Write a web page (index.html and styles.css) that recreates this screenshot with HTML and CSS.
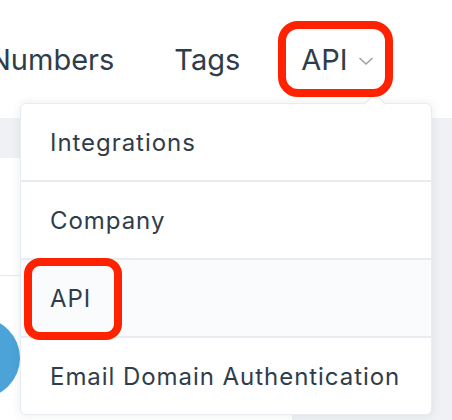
FILE: index.html
```html
<!DOCTYPE html>
<html lang="en">
<head>
    <meta charset="UTF-8">
    <meta name="viewport" content="width=device-width, initial-scale=1.0">
    <title>Settings menu</title>
    <link rel="stylesheet" href="styles.css">
</head>
<body>
    <div class="page">
        <header class="topbar">
            <nav class="nav">
                <a class="nav-item nav-first">Numbers</a>
                <a class="nav-item nav-tags">Tags</a>
                <a class="nav-item nav-active">API
                    <svg class="chevron" width="16" height="10" viewBox="0 0 16 10">
                        <path d="M1.5 2 L8 8 L14.5 2" fill="none" stroke="#9aa2ab" stroke-width="1.6"/>
                    </svg>
                </a>
            </nav>
        </header>

        <div class="content">
            <div class="toolbar"></div>
            <div class="panel">
                <div class="panel-row"></div>
                <div class="avatar"></div>
            </div>
        </div>

        <!-- dropdown under the API tab -->
        <div class="dropdown">
            <div class="dropdown-caret"></div>
            <ul class="menu">
                <li class="menu-item">Integrations</li>
                <li class="menu-item">Company</li>
                <li class="menu-item hovered">API</li>
                <li class="menu-item">Email Domain Authentication</li>
            </ul>
        </div>

        <!-- red annotation boxes -->
        <div class="mark mark-tab"></div>
        <div class="mark mark-item"></div>
    </div>
</body>
</html>
```

FILE: styles.css
```css
* {
    box-sizing: border-box;
}

body {
    margin: 0;
    font-family: 'Inter', 'Open Sans', sans-serif;
    color: #2f3d4b;
    background-color: white;
}

.page {
    position: relative;
    width: 452px;
    height: 420px;
    overflow: hidden;
}

.topbar {
    height: 118px;
    background-color: white;
}

.nav {
    display: flex;
    align-items: center;
    height: 118px;
}

.nav-item {
    font-size: 29px;
    color: #2f3d4b;
    white-space: nowrap;
}

.nav-first {
    margin-left: -11px;
}

.nav-tags {
    margin-left: 60px;
}

.nav-active {
    display: flex;
    align-items: center;
    gap: 10px;
    margin-left: 61px;
}

.chevron {
    margin-top: 4px;
}

.content {
    display: flex;
    flex-direction: column;
    height: 302px;
    background-color: #eff1f4;
}

.toolbar {
    height: 40px;
}

.panel {
    position: relative;
    flex: 1;
    width: 292px;
    background-color: white;
}

.panel-row {
    height: 118px;
    border-bottom: 1px solid #e7eaee;
}

.avatar {
    position: absolute;
    left: -60px;
    top: 160px;
    width: 80px;
    height: 80px;
    border-radius: 50%;
    background-color: #4ba3d8;
}

.dropdown {
    position: absolute;
    left: 20px;
    top: 103px;
    width: 412px;
    background-color: white;
    border: 1px solid #e9ecf0;
    border-radius: 6px;
    box-shadow: 0 0 10px rgba(40, 55, 75, 0.1);
}

.dropdown-caret {
    position: absolute;
    top: -8px;
    left: 346px;
    width: 16px;
    height: 16px;
    background-color: white;
    border-top: 1px solid #e3e7ec;
    border-left: 1px solid #e3e7ec;
    transform: rotate(45deg);
}

.menu {
    position: relative;
    list-style: none;
    margin: 0;
    padding: 0;
}

.menu-item {
    height: 78px;
    display: flex;
    align-items: center;
    padding-left: 29px;
    font-size: 24px;
    letter-spacing: 0.95px;
    border-bottom: 2px solid #e8ebef;
}

.menu-item:last-child {
    border-bottom: none;
    height: 76px;
}

.hovered {
    background-color: #fafbfc;
}

.mark {
    position: absolute;
    border: 8px solid #ff2200;
}

.mark-tab {
    left: 278px;
    top: 21px;
    width: 115px;
    height: 76px;
    border-radius: 20px;
}

.mark-item {
    left: 24px;
    top: 258px;
    width: 98px;
    height: 82px;
    border-radius: 16px;
}
```
